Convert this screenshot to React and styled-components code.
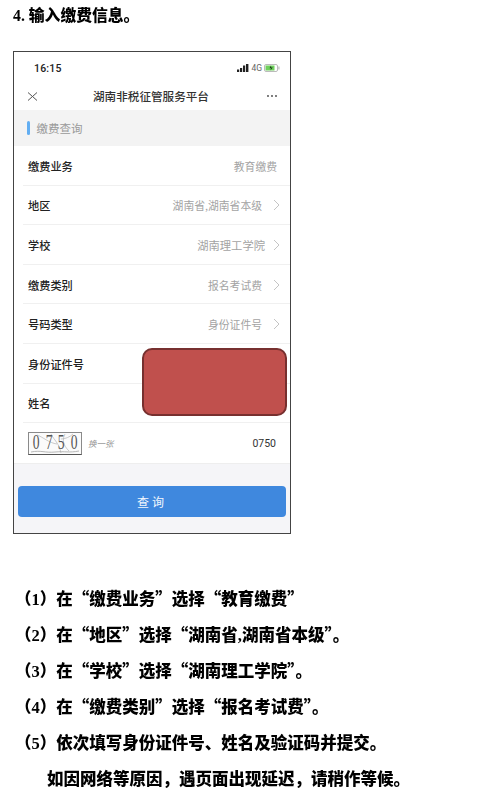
import styled, { createGlobalStyle } from "styled-components";

const GlobalStyle = createGlobalStyle`
  html, body {
    margin: 0;
    padding: 0;
    background: #fff;
  }
  body {
    font-family: "Noto Sans CJK SC", "Liberation Sans", sans-serif;
  }
`;

const Page = styled.div`
  width: 500px;
  height: 799px;
  overflow: hidden;
  display: flex;
  flex-direction: column;
  filter: blur(0.3px);
`;

const Heading = styled.h1`
  margin: 0;
  height: 30px;
  padding-left: 13px;
  font-size: 15.8px;
  line-height: 30px;
  font-weight: 900;
  color: #000;
`;

const Latin = styled.span`
  font-family: "Liberation Serif", serif;
  font-weight: 700;
`;

const Phone = styled.div`
  position: relative;
  box-sizing: border-box;
  width: 278px;
  height: 483px;
  margin: 21px 0 0 13px;
  border: 1px solid #444;
  background: #f5f5f8;
  display: flex;
  flex-direction: column;
`;

const StatusBar = styled.div`
  height: 30px;
  flex: none;
  background: #fff;
  display: flex;
  align-items: center;
  justify-content: space-between;
  padding: 2px 10px 0 20px;
  box-sizing: border-box;
  font-family: Roboto, "Liberation Sans", sans-serif;
`;

const Clock = styled.span`
  font-size: 10.5px;
  font-weight: 500;
  color: #222;
  letter-spacing: 0.2px;
`;

const StatusIcons = styled.div`
  display: flex;
  align-items: center;
  gap: 2px;
  font-size: 8.5px;
  color: #666;
`;

const NavBar = styled.div`
  height: 28px;
  flex: none;
  background: #fff;
  display: flex;
  align-items: center;
  justify-content: space-between;
  padding: 0 13px;
`;

const NavTitle = styled.div`
  margin-right: 3px;
  font-size: 11.6px;
  color: #333;
  font-weight: 500;
`;

const SectionHeader = styled.div`
  height: 36px;
  flex: none;
  background: #f3f3f3;
  display: flex;
  align-items: center;
  gap: 7px;
  padding-left: 12.5px;
  box-sizing: border-box;
  font-size: 11.5px;
  color: #9a9a9a;
`;

const SectionMark = styled.i`
  display: block;
  width: 3px;
  height: 14px;
  border-radius: 1.5px;
  background: #62aef2;
`;

const Form = styled.div`
  flex: none;
  background: #fff;
  padding-left: 9px;
`;

const Row = styled.div`
  height: 39.6px;
  box-sizing: border-box;
  display: flex;
  align-items: center;
  justify-content: space-between;
  padding: 1px ${(p) => (p.$arrow ? "10px" : p.$last ? "14px" : "13px")} 0 5px;
  border-bottom: ${(p) => (p.$last ? "none" : "1px solid #f0f0f0")};
`;

const Label = styled.span`
  font-size: 11.2px;
  color: #222;
  font-weight: 500;
`;

const Value = styled.span`
  display: flex;
  align-items: center;
  gap: ${(p) => p.$gap || 11}px;
  font-size: ${(p) => p.$size || 10.8}px;
  color: #a3a3a3;
`;

const CaptchaGroup = styled.div`
  display: flex;
  align-items: center;
  gap: 6px;
`;

const Captcha = styled.div`
  position: relative;
  box-sizing: border-box;
  width: 54px;
  height: 23px;
  border: 1px solid #8a8a8a;
  border-bottom-color: #555;
  background: #fbfbfb;
  display: flex;
  align-items: center;
  justify-content: space-between;
  padding: 0 3px;
  font-family: "Liberation Serif", serif;
  font-size: 17px;
  color: #555;
  overflow: hidden;
`;

const CaptchaDigit = styled.span`
  display: block;
  transform: scale(0.8, 1.2);
`;

const CaptchaNoise = styled.svg`
  position: absolute;
  left: 0;
  top: 0;
`;

const SwapLink = styled.span`
  font-size: 8.5px;
  font-style: italic;
  color: #999;
`;

const CaptchaValue = styled.span`
  font-family: Roboto, "Liberation Sans", sans-serif;
  font-size: 10.5px;
  color: #333;
`;

const ButtonArea = styled.div`
  flex: 1;
  border-top: 1px solid #eeeeee;
  padding: 22px 4px 0;
`;

const SubmitButton = styled.button`
  display: block;
  width: 100%;
  height: 31px;
  border: none;
  border-radius: 4px;
  background: #3f88de;
  color: #f2f7fd;
  font-family: inherit;
  font-size: 12px;
  letter-spacing: 3px;
`;

const Redaction = styled.div`
  position: absolute;
  left: 128px;
  top: 296px;
  box-sizing: border-box;
  width: 145px;
  height: 68px;
  border: 2px solid #77302f;
  border-radius: 10px;
  background: #c0504d;
`;

const Steps = styled.div`
  margin-top: 46px;
  display: flex;
  flex-direction: column;
`;

const Step = styled.div`
  height: 36px;
  line-height: 36px;
  padding-left: ${(p) => (p.$indent ? "47px" : "15px")};
  font-size: 16.5px;
  font-weight: 900;
  color: #000;
  white-space: nowrap;
`;

const Chevron = () => (
  <svg width="7" height="12" viewBox="0 0 7 12" fill="none">
    <path d="M1 1l5 5-5 5" stroke="#c4c4c4" strokeWidth="1" />
  </svg>
);

const SignalIcon = () => (
  <svg width="12" height="8" viewBox="0 0 12 8">
    <rect x="0" y="5.5" width="2.2" height="2.5" fill="#222" />
    <rect x="3" y="4" width="2.2" height="4" fill="#222" />
    <rect x="6" y="1.5" width="2.2" height="6.5" fill="#222" />
    <rect x="9" y="0" width="2.4" height="8" fill="#222" />
  </svg>
);

const BatteryIcon = () => (
  <svg width="16" height="8" viewBox="0 0 16 8">
    <rect x="0.5" y="0.5" width="13" height="7" rx="1.5" fill="none" stroke="#bbb" />
    <rect x="1.5" y="1.5" width="9" height="5" fill="#6fd05c" />
    <path d="M7 1.5L5.5 4.3h1.6L6.4 6.5l2.4-3H7.2z" fill="#1d3d1d" />
    <rect x="14.3" y="2.5" width="1.2" height="3" fill="#bbb" />
  </svg>
);

const CloseIcon = () => (
  <svg width="11" height="9" viewBox="0 0 11 9" fill="none">
    <path d="M1 .5l9 8M10 .5l-9 8" stroke="#555" strokeWidth="1" />
  </svg>
);

const MoreIcon = () => (
  <svg width="10" height="2" viewBox="0 0 10 2">
    <circle cx="1" cy="1" r="0.9" fill="#444" />
    <circle cx="5" cy="1" r="0.9" fill="#444" />
    <circle cx="9" cy="1" r="0.9" fill="#444" />
  </svg>
);

const rows = [
  { label: "缴费业务", value: "教育缴费" },
  { label: "地区", value: "湖南省,湖南省本级", arrow: true },
  { label: "学校", value: "湖南理工学院", arrow: true, gap: 8, size: 11.3 },
  { label: "缴费类别", value: "报名考试费", arrow: true },
  { label: "号码类型", value: "身份证件号", arrow: true },
  { label: "身份证件号" },
  { label: "姓名" },
];

export default function App() {
  return (
    <>
      <GlobalStyle />
      <Page>
        <Heading>
          <Latin>4. </Latin>输入缴费信息。
        </Heading>

        <Phone>
          <StatusBar>
            <Clock>16:15</Clock>
            <StatusIcons>
              <SignalIcon />
              <span>4G</span>
              <BatteryIcon />
            </StatusIcons>
          </StatusBar>
          <NavBar>
            <CloseIcon />
            <NavTitle>湖南非税征管服务平台</NavTitle>
            <MoreIcon />
          </NavBar>
          <SectionHeader>
            <SectionMark />
            缴费查询
          </SectionHeader>
          <Form>
            {rows.map((row) => (
              <Row key={row.label} $arrow={row.arrow}>
                <Label>{row.label}</Label>
                {row.value && (
                  <Value $gap={row.gap} $size={row.size}>
                    {row.value}
                    {row.arrow && <Chevron />}
                  </Value>
                )}
              </Row>
            ))}
            <Row $last>
              <CaptchaGroup>
                <Captcha>
                  <CaptchaNoise width="52" height="21" viewBox="0 0 52 21" fill="none">
                    <path d="M2 19c10-2 14 1 24 0s14 1 24-1" stroke="#999" strokeWidth=".7" />
                    <path d="M22 1c3 6 8 9 10 19M36 1c-3 6-2 11 4 17M8 2c6 2 12 8 20 9M44 1c-3 3-8 5-12 5" stroke="#aaa" strokeWidth=".6" />
                  </CaptchaNoise>
                  {["0", "7", "5", "0"].map((digit, i) => (
                    <CaptchaDigit key={i}>{digit}</CaptchaDigit>
                  ))}
                </Captcha>
                <SwapLink>换一张</SwapLink>
              </CaptchaGroup>
              <CaptchaValue>0750</CaptchaValue>
            </Row>
          </Form>
          <ButtonArea>
            <SubmitButton>查询</SubmitButton>
          </ButtonArea>
          <Redaction />
        </Phone>

        <Steps>
          <Step>（<Latin>1</Latin>）在“缴费业务”选择“教育缴费”</Step>
          <Step>（<Latin>2</Latin>）在“地区”选择“湖南省<Latin>,</Latin>湖南省本级”。</Step>
          <Step>（<Latin>3</Latin>）在“学校”选择“湖南理工学院”。</Step>
          <Step>（<Latin>4</Latin>）在“缴费类别”选择“报名考试费”。</Step>
          <Step>（<Latin>5</Latin>）依次填写身份证件号、姓名及验证码并提交。</Step>
          <Step $indent>如因网络等原因，遇页面出现延迟，请稍作等候。</Step>
        </Steps>
      </Page>
    </>
  );
}
